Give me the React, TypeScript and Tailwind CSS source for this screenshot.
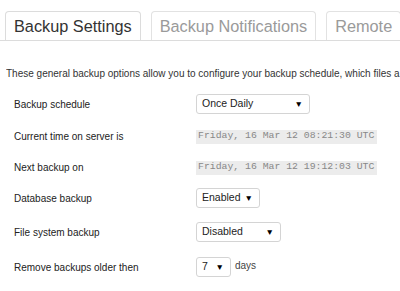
type Row = {
  label: string;
  mt: string;
  kind: 'select' | 'time';
  value: string;
  width?: string;
  suffix?: string;
};

const rows: Row[] = [
  { label: 'Backup schedule', mt: 'mt-[94px]', kind: 'select', value: 'Once Daily', width: 'w-[114px]' },
  { label: 'Current time on server is', mt: 'mt-[15px]', kind: 'time', value: 'Friday, 16 Mar 12 08:21:30 UTC' },
  { label: 'Next backup on', mt: 'mt-[16px]', kind: 'time', value: 'Friday, 16 Mar 12 19:12:03 UTC' },
  { label: 'Database backup', mt: 'mt-[13px]', kind: 'select', value: 'Enabled', width: 'w-[64px]' },
  { label: 'File system backup', mt: 'mt-[14px]', kind: 'select', value: 'Disabled', width: 'w-[85px]' },
  { label: 'Remove backups older then', mt: 'mt-[15px]', kind: 'select', value: '7', width: 'w-[35px]', suffix: 'days' },
];

const FakeSelect = ({ value, width }: { value: string; width?: string }) => (
  <div
    className={`${width} h-[20px] flex items-center justify-between pl-[5px] pr-[6px] border border-[#d4d4d4] rounded-[3px] bg-white text-[10.5px] text-[#222]`}
  >
    <span>{value}</span>
    <span className="text-[8.5px] leading-none text-black">▼</span>
  </div>
);

const App = () => {
  return (
    <div className="w-[400px] h-[291px] overflow-hidden bg-white font-['Liberation_Sans',Arial,sans-serif] relative">
      {/* tabs */}
      <div className="flex gap-[10px] pl-[5px] pt-[11px] border-b border-[#dcdcdc] whitespace-nowrap">
        <div className="h-[29px] px-[8px] flex items-center border border-b-0 border-[#dcdcdc] rounded-t-[4px] text-[16.3px] text-[#333]">
          Backup Settings
        </div>
        <div className="h-[29px] px-[8px] flex items-center border border-b-0 border-[#e2e2e2] rounded-t-[4px] text-[16.3px] text-[#9a9a9a]">
          Backup Notifications
        </div>
        <div className="h-[29px] px-[8px] flex items-center border border-b-0 border-[#e2e2e2] rounded-t-[4px] text-[16.3px] text-[#9a9a9a]">
          Remote
        </div>
      </div>

      <p className="absolute left-[6px] top-[66px] w-[394px] overflow-hidden text-[10px] text-[#333] whitespace-nowrap">
        These general backup options allow you to configure your backup schedule, which files a
      </p>

      <div className="absolute left-0 top-0 w-full flex flex-col">
        {rows.map((row) => (
          <div key={row.label} className={`${row.mt} flex items-center`}>
            <div className="w-[196px] pl-[14px] text-[10px] text-[#222]">{row.label}</div>
            {row.kind === 'select' ? (
              <div className="flex items-center gap-[4px]">
                <FakeSelect value={row.value} width={row.width} />
                {row.suffix && <span className="text-[10px] text-[#444] -mt-[4px]">{row.suffix}</span>}
              </div>
            ) : (
              <div className="h-[14px] flex items-center pl-[2px] pr-[3px] bg-[#ececec] font-['Liberation_Mono',monospace] text-[9.8px] text-[#888] whitespace-nowrap">
                {row.value}
              </div>
            )}
          </div>
        ))}
      </div>
    </div>
  );
};

export default App;
